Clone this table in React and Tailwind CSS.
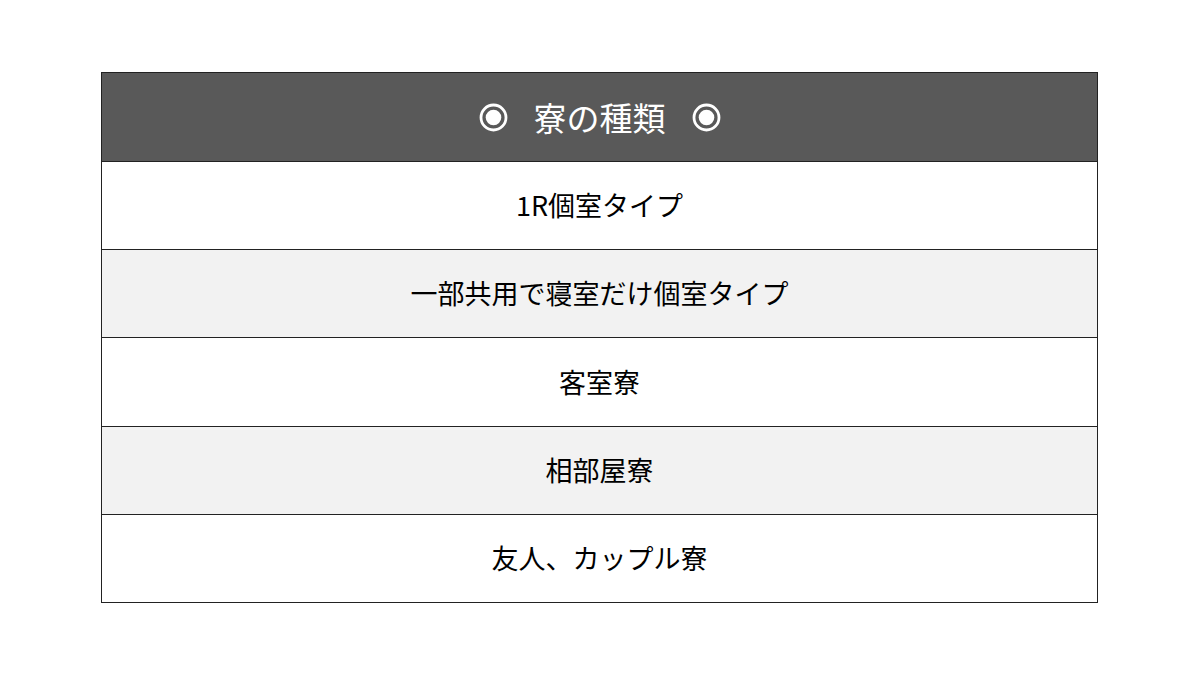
function Circ() {
  return (
    <svg width="29" height="29" viewBox="0 0 29 29" className="shrink-0">
      <circle cx="14.5" cy="14.5" r="12.5" fill="none" stroke="white" strokeWidth="2.8" />
      <circle cx="14.5" cy="14.5" r="7.8" fill="white" />
    </svg>
  );
}

export default function App() {
  const rows = [
    { t: "1R個室タイプ", bg: "bg-white", h: "h-[88px]" },
    { t: "一部共用で寝室だけ個室タイプ", bg: "bg-[#f2f2f2]", h: "h-[88px]" },
    { t: "客室寮", bg: "bg-white", h: "h-[89px]" },
    { t: "相部屋寮", bg: "bg-[#f2f2f2]", h: "h-[88px]" },
    { t: "友人、カップル寮", bg: "bg-white", h: "h-[87px]" },
  ];
  return (
    <div className="w-[1200px] h-[675px] bg-white pt-[72px] font-['Noto_Sans_CJK_JP','Noto_Sans',sans-serif]">
      <div className="ml-[101px] w-[997px] border border-[#222]">
        <div className="h-[89px] bg-[#595959] border-b border-[#222] flex items-center justify-center text-white text-[33px] gap-[26px]">
          <Circ />
          <span className="leading-none">寮の種類</span>
          <Circ />
        </div>
        {rows.map((r, i) => (
          <div
            key={i}
            className={`${r.h} ${r.bg} ${i < rows.length - 1 ? "border-b border-[#222]" : ""} flex items-center justify-center text-[27px] text-black`}
          >
            {r.t}
          </div>
        ))}
      </div>
    </div>
  );
}
